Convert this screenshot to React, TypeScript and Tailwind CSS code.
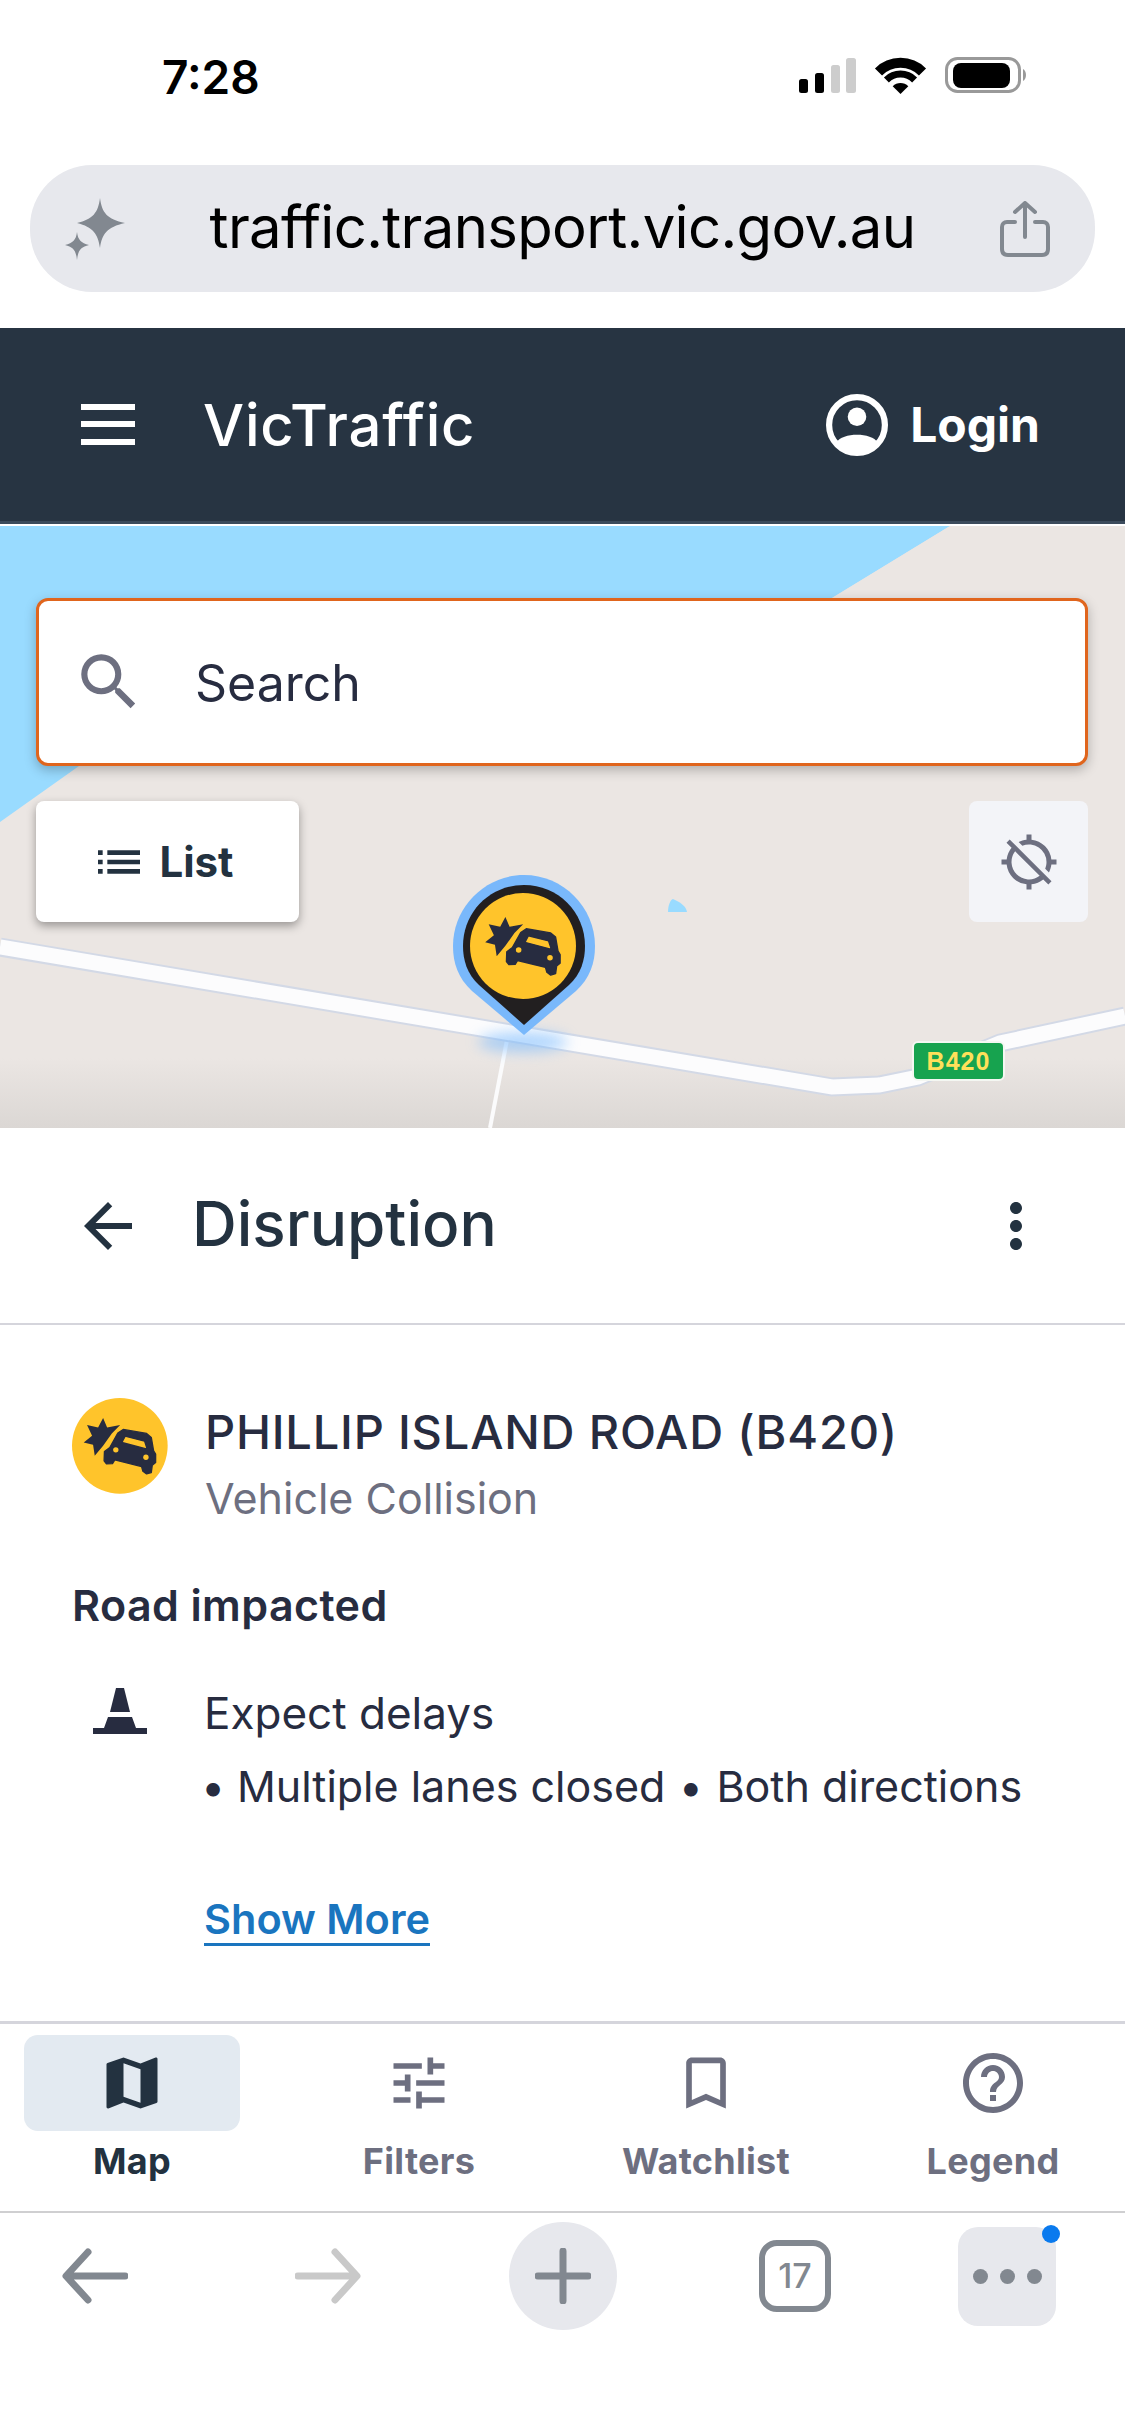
import { MdArrowBack, MdBookmarkBorder, MdHelpOutline, MdList, MdLocationDisabled, MdMap, MdMoreVert, MdSearch, MdTune } from "react-icons/md";

function CrashIcon() {
  return (
    <g fill="#272c40">
      <path d="M160 107L172 135L211 128L186 153L160 190L135 220L130 187L102 180L127 160L112 128L145 135Z" />
      <path
        fillRule="evenodd"
        stroke="#272c40"
        strokeWidth="4"
        strokeLinejoin="round"
        d="M220 141L290 153L304 165L311 205L317 215L317 240L307 248L304 270L290 274L279 266L275 252L195 232L188 243L170 244L163 235L164 207L180 195L204 152ZM226 161L216 180L292 200L284 176Z"
      />
      <circle cx="198" cy="202" r="8" fill="#ffc42b" />
      <circle cx="288" cy="224" r="8" fill="#ffc42b" />
    </g>
  );
}

function MapLayer() {
  return (
    <svg className="absolute inset-0" width="1125" height="602" viewBox="0 526 1125 602">
      <defs>
        <linearGradient id="mapShade" x1="0" y1="0" x2="0" y2="1">
          <stop offset="0" stopColor="#dbd7d4" stopOpacity="0" />
          <stop offset="1" stopColor="#dbd7d4" />
        </linearGradient>
      </defs>
      <rect x="0" y="526" width="1125" height="602" fill="#ebe6e3" />
      <rect x="0" y="1058" width="1125" height="70" fill="url(#mapShade)" />
      <path d="M0 526H950L832 598L79 766L0 822Z" fill="#99dbff" />
      <path d="M950 526L830 650L832 598Z" fill="#ebe6e3" />
      <path d="M668 912C668 906 670 900 673 899C680 902 686 906 687 912Z" fill="#99dbff" />
      <path d="M507 1040L490 1128" stroke="#fbfbfc" strokeWidth="4" fill="none" />
      <path d="M0 947L832 1087L879 1085L918 1077L1000 1043L1125 1016" stroke="#d3d9e6" strokeWidth="19" fill="none" />
      <path d="M0 947L832 1087L879 1085L918 1077L1000 1043L1125 1016" stroke="#fcfcfd" strokeWidth="15" fill="none" />
    </svg>
  );
}

function NavTab({ label, active, children }: { label: string; active?: boolean; children: React.ReactNode }) {
  return (
    <div className={`flex flex-col items-center ${active ? "text-[#233240]" : "text-[#6d6f80]"}`}>
      <div className={`flex h-[96px] w-[216px] items-center justify-center rounded-[14px] ${active ? "bg-[#e3eaf1]" : ""}`}>{children}</div>
      <span className="mt-[8px] whitespace-nowrap text-[36px] leading-[44px] font-bold tracking-[0.3px]">{label}</span>
    </div>
  );
}

export default function App() {
  return (
    <div className="flex h-[2436px] w-[1125px] flex-col overflow-hidden bg-white font-[family-name:Inter,sans-serif] text-[#272c40]">
      {/* ios status bar */}
      <div className="flex h-[165px] shrink-0 items-start justify-between pt-[52px] pr-[97px] pl-[162px]">
        <span className="text-[46px] leading-[50px] font-semibold text-black">7:28</span>
        <svg width="230" height="40" viewBox="0 0 230 40" className="mt-[4px]">
          <rect x="1" y="23" width="9" height="14" rx="2.5" fill="#000" />
          <rect x="17" y="17" width="9" height="20" rx="2.5" fill="#000" />
          <rect x="33" y="9" width="9" height="28" rx="2.5" fill="#cdcdcd" />
          <rect x="48" y="2" width="10" height="35" rx="2.5" fill="#cdcdcd" />
          <path d="M80.5 16A31 31 0 0 1 124.5 16" stroke="#000" strokeWidth="10" fill="none" />
          <path d="M88.4 23.9A20 20 0 0 1 116.6 23.9" stroke="#000" strokeWidth="7" fill="none" />
          <path d="M102.5 38L94.7 30.2A11 11 0 0 1 110.3 30.2Z" fill="#000" />
          <rect x="148.5" y="2.5" width="73" height="33" rx="11" fill="none" stroke="#999" strokeWidth="3" />
          <rect x="155" y="7" width="57" height="25" rx="8" fill="#000" />
          <path d="M225 13C229 15 229 23 225 25Z" fill="#999" />
        </svg>
      </div>

      {/* safari url bar */}
      <div className="h-[163px] shrink-0 px-[30px]">
        <div className="flex h-[127px] items-center justify-between rounded-[62px] bg-[#e7e8ed] pr-[45px] pl-[35px]">
          <svg width="60" height="62" viewBox="0 0 60 62">
            <path d="M35 0C37 15 42 21 60 25C42 29 37 36 35 50C33 36 28 29 12 25C28 21 33 15 35 0Z" fill="#828890" />
            <path d="M12 34C13 42 16 45 24 47C16 49 13 52 12 62C11 52 8 49 0 47C8 45 11 42 12 34Z" fill="#828890" />
          </svg>
          <span className="-mt-[3px] text-[58px] leading-[70px] tracking-[-0.66px] text-black">traffic.transport.vic.gov.au</span>
          <svg width="50" height="56" viewBox="0 0 50 56" fill="none" stroke="#828890" strokeWidth="4" strokeLinecap="round" strokeLinejoin="round">
            <path d="M15 21H7C4 21 2 23 2 26V48C2 52 4 54 8 54H42C46 54 48 52 48 48V26C48 23 46 21 43 21H35" />
            <path d="M25 36V3M15 11L25 2L35 11" />
          </svg>
        </div>
      </div>

      {/* app header */}
      <header className="flex h-[196px] shrink-0 items-center justify-between border-b-[3px] border-[#3b4b5c] bg-[#273442] pr-[85px] pl-[81px] text-white">
        <div className="flex items-center gap-[68px]">
          <svg width="54" height="42" viewBox="0 0 54 42" fill="#fff">
            <rect y="0" width="54" height="6" />
            <rect y="17" width="54" height="6" />
            <rect y="35" width="54" height="6" />
          </svg>
          <span className="text-[58px] leading-[70px] font-medium tracking-[0.8px]">VicTraffic</span>
        </div>
        <div className="flex items-center gap-[22px]">
          <svg width="62" height="62" viewBox="0 0 60 60">
            <circle cx="30" cy="30" r="27" fill="none" stroke="#fff" strokeWidth="6" />
            <circle cx="30" cy="22" r="9" fill="#fff" />
            <path d="M10 47C16 37 44 37 50 47C40 60 20 60 10 47Z" fill="#fff" />
          </svg>
          <span className="text-[48px] leading-[60px] font-bold">Login</span>
        </div>
      </header>

      {/* map */}
      <div className="relative mt-[2px] h-[602px] shrink-0 overflow-hidden">
        <MapLayer />
        <div className="absolute top-[72px] left-[36px] flex h-[168px] w-[1052px] items-center rounded-[12px] border-[3px] border-[#e0651d] bg-white pl-[33px] shadow-[0_4px_12px_rgba(0,0,0,0.25)]">
          <MdSearch size={74} className="text-[#6d6f80]" />
          <span className="mt-[2px] ml-[49px] text-[50px] leading-[60px]">Search</span>
        </div>
        <div className="absolute top-[275px] left-[36px] flex h-[121px] w-[263px] items-center justify-center gap-[12px] rounded-[8px] bg-white pr-[10px] text-[#233240] shadow-[0_4px_10px_rgba(0,0,0,0.35)]">
          <MdList size={56} />
          <span className="text-[42px] leading-[50px] font-bold">List</span>
        </div>
        <div className="absolute top-[275px] left-[969px] flex h-[121px] w-[119px] items-center justify-center rounded-[8px] bg-[#f3f4f8] text-[#6d6f80]">
          <MdLocationDisabled size={60} />
        </div>
        <div className="absolute top-[506px] left-[478px] h-[20px] w-[90px] rounded-[50%] bg-[#7cbcff] opacity-60 blur-[7px]" />
        <svg className="absolute top-[349px] left-[453px]" width="142" height="160" viewBox="0 0 142 160">
          <path d="M71 160L19 116C5 103 0 88 0 71C0 32 32 0 71 0C110 0 142 32 142 71C142 88 137 103 123 116Z" fill="#79b8fb" />
          <path d="M71 150L26 110C14 99 10 85 10 71C10 37 37 10 71 10C105 10 132 37 132 71C132 85 128 99 116 110Z" fill="#221f20" />
          <circle cx="70" cy="71" r="53" fill="#ffc42b" />
          <svg x="20" y="21" width="100" height="100" viewBox="67 47 287 287">
            <CrashIcon />
          </svg>
        </svg>
        <div className="absolute top-[515px] left-[912px] flex h-[40px] w-[93px] items-center justify-center rounded-[6px] border-[2px] border-[#f4f7f2] bg-[#17a34f] font-[family-name:'Liberation_Sans',sans-serif] text-[25px] leading-[30px] font-bold tracking-[1px] text-[#ffe05a]">
          B420
        </div>
      </div>

      {/* panel title */}
      <div className="flex h-[197px] shrink-0 items-center justify-between border-b-[2px] border-[#d5d5dc] pr-[73px] pl-[72px] text-[#233240]">
        <div className="flex items-center gap-[48px]">
          <MdArrowBack size={72} />
          <span className="-mt-[3px] text-[62px] leading-[70px] font-medium">Disruption</span>
        </div>
        <MdMoreVert size={72} />
      </div>

      {/* disruption details */}
      <div className="flex-1 px-[72px] pt-[73px]">
        <div className="flex gap-[37px]">
          <svg width="96" height="96" viewBox="67 47 287 287" className="shrink-0">
            <circle cx="210" cy="190" r="143" fill="#ffc42b" />
            <CrashIcon />
          </svg>
          <div className="mt-[3px]">
            <h2 className="text-[47px] leading-[62px] font-medium tracking-[0.8px]">PHILLIP ISLAND ROAD (B420)</h2>
            <p className="mt-[9px] text-[43px] leading-[52px] text-[#6d6f80]">Vehicle Collision</p>
          </div>
        </div>
        <h3 className="mt-[56px] text-[43px] leading-[50px] font-semibold tracking-[0.4px]">Road impacted</h3>
        <div className="mt-[56px] flex gap-[57px]">
          <svg width="54" height="46" viewBox="0 0 54 46" className="mt-[2px] ml-[21px] shrink-0" fill="#272c40">
            <path d="M23 0C25 -1 29 -1 31 0L37 24H17Z" />
            <path d="M15 29H39L43 40H54V46H0V40H11Z" />
          </svg>
          <div>
            <p className="text-[44px] leading-[54px]">Expect delays</p>
            <p className="mt-[19px] text-[43px] leading-[54px] whitespace-nowrap">
              <span className="-ml-[3px] inline-block w-[36px]">•</span>Multiple lanes closed<span className="inline-block w-[51px] text-center">•</span>Both directions
            </p>
            <a className="mt-[82px] block w-fit border-b-[3px] border-[#1a75bf] text-[41.5px] leading-[48px] font-semibold text-[#1a75bf]">Show More</a>
          </div>
        </div>
      </div>

      {/* app tabs */}
      <nav className="grid h-[190px] shrink-0 grid-cols-4 gap-[71px] border-t-[3px] border-[#d5d5dc] px-[24px] pt-[11px]">
        <NavTab label="Map" active>
          <MdMap size={68} />
        </NavTab>
        <NavTab label="Filters">
          <MdTune size={68} />
        </NavTab>
        <NavTab label="Watchlist">
          <MdBookmarkBorder size={68} />
        </NavTab>
        <NavTab label="Legend">
          <MdHelpOutline size={72} />
        </NavTab>
      </nav>

      {/* safari toolbar */}
      <div className="flex h-[225px] shrink-0 items-start border-t-[2px] border-[#cfcfd1] pt-[9px]">
        <div className="flex h-[108px] w-[190px] items-center justify-center">
          <svg width="66" height="56" viewBox="0 0 66 56" fill="none" stroke="#828890" strokeWidth="7" strokeLinecap="round" strokeLinejoin="round">
            <path d="M63 28H5M26 4L4 28L26 52" />
          </svg>
        </div>
        <div className="flex h-[108px] w-[276px] items-center justify-center">
          <svg width="66" height="56" viewBox="0 0 66 56" fill="none" stroke="#c9c9c9" strokeWidth="7" strokeLinecap="round" strokeLinejoin="round">
            <path d="M3 28H61M40 4L62 28L40 52" />
          </svg>
        </div>
        <div className="flex h-[108px] w-[194px] items-center justify-center">
          <div className="flex h-[108px] w-[108px] items-center justify-center rounded-full bg-[#e7e8ed]">
            <svg width="56" height="56" viewBox="0 0 56 56" fill="none" stroke="#828890" strokeWidth="7" strokeLinecap="round">
              <path d="M28 3V53M3 28H53" />
            </svg>
          </div>
        </div>
        <div className="flex h-[108px] w-[270px] items-center justify-center">
          <div className="flex h-[72px] w-[72px] items-center justify-center rounded-[18px] border-[6px] border-[#828890] text-[34px] leading-[40px] font-medium text-[#828890]">17</div>
        </div>
        <div className="flex h-[108px] w-[154px] items-center justify-center">
          <div className="relative flex h-[99px] w-[98px] items-center justify-center gap-[12px] rounded-[20px] bg-[#e7e8ed]">
            <span className="h-[15px] w-[15px] rounded-full bg-[#828890]" />
            <span className="h-[15px] w-[15px] rounded-full bg-[#828890]" />
            <span className="h-[15px] w-[15px] rounded-full bg-[#828890]" />
            <span className="absolute -top-[2px] -right-[4px] h-[18px] w-[18px] rounded-full bg-[#0a7aee]" />
          </div>
        </div>
      </div>
    </div>
  );
}
